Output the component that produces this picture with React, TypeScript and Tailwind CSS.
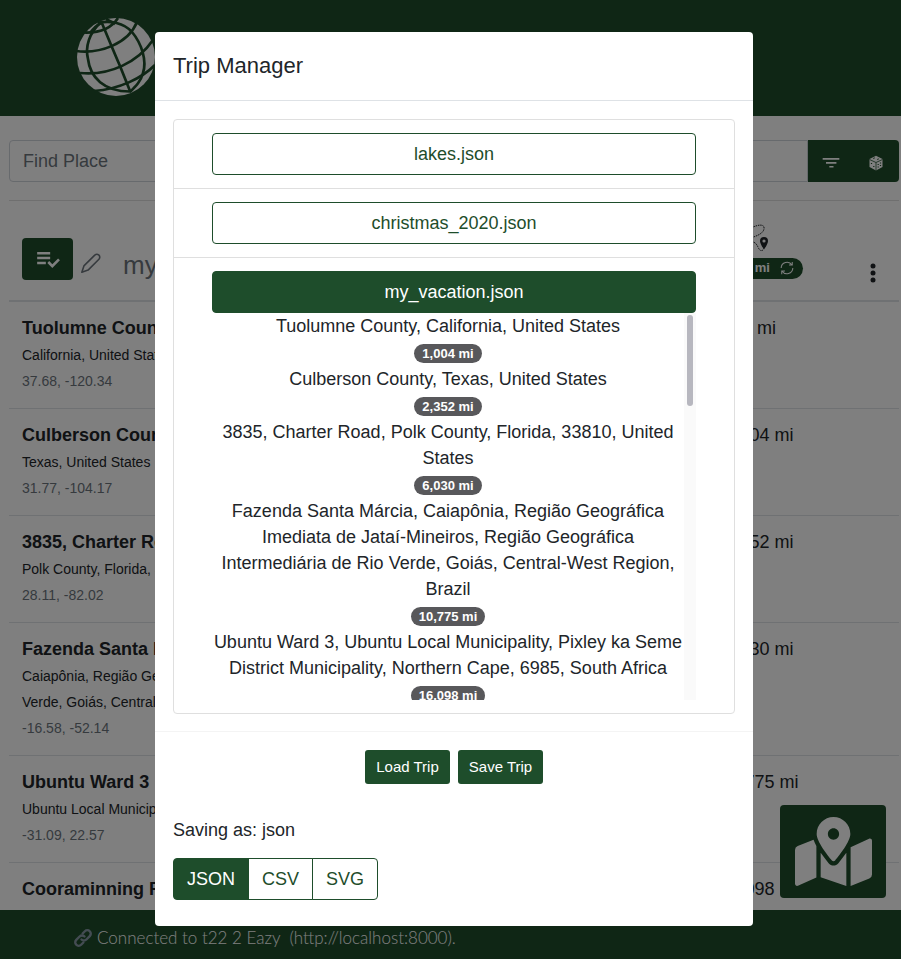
import React, { useState } from "react";

type Place = { title: string; detail: string; coords: string; distance: string };

const places: Place[] = [
  { title: "Tuolumne County", detail: "California, United States", coords: "37.68, -120.34", distance: "0 mi" },
  { title: "Culberson County", detail: "Texas, United States", coords: "31.77, -104.17", distance: "1,004 mi" },
  { title: "3835, Charter Road", detail: "Polk County, Florida, 33810, United States", coords: "28.11, -82.02", distance: "2,352 mi" },
  {
    title: "Fazenda Santa Márcia",
    detail:
      "Caiapônia, Região Geográfica Imediata de Jataí-Mineiros, Região Geográfica Intermediária de Rio Verde, Goiás, Central-West Region, Brazil",
    coords: "-16.58, -52.14",
    distance: "6,030 mi",
  },
  {
    title: "Ubuntu Ward 3",
    detail: "Ubuntu Local Municipality, Pixley ka Seme District Municipality, Northern Cape, 6985, South Africa",
    coords: "-31.09, 22.57",
    distance: "10,775 mi",
  },
  { title: "Cooraminning Road", detail: "Brookton, Western Australia", coords: "-32.99, 117.18", distance: "16,098 mi" },
];

const stops = [
  { name: "Tuolumne County, California, United States", total: "1,004 mi" },
  { name: "Culberson County, Texas, United States", total: "2,352 mi" },
  { name: "3835, Charter Road, Polk County, Florida, 33810, United States", total: "6,030 mi" },
  {
    name: "Fazenda Santa Márcia, Caiapônia, Região Geográfica Imediata de Jataí-Mineiros, Região Geográfica Intermediária de Rio Verde, Goiás, Central-West Region, Brazil",
    total: "10,775 mi",
  },
  {
    name: "Ubuntu Ward 3, Ubuntu Local Municipality, Pixley ka Seme District Municipality, Northern Cape, 6985, South Africa",
    total: "16,098 mi",
  },
];

function Globe() {
  return (
    <svg viewBox="0 0 80 80" className="size-20" aria-hidden="true">
      <circle cx="40" cy="40" r="39" fill="#fff" />
      <g fill="none" stroke="#1e4d2b" strokeWidth="2.7">
        <path d="M25 4 C31 18 37 33 44 49 L54 74" />
        <path d="M25 5 C13 16 9 30 12 42 C14 60 28 75 55 74.500" />
        <path d="M22 6 C34 3 48 6 56 15 C66 27 71 44 67 56 C65 64 60 69 54 75" />
        <path d="M8 15.500 C22 16 35 12 42 1" />
        <path d="M0 34 C24 37 52 27 61 5" />
        <path d="M4 56 C34 59 62 45 77 23" />
        <path d="M18 74 C44 72 66 61 79 48" />
        <path d="M14 16 C18 11 21 8 25 6 M30 2 L39 7" />
      </g>
    </svg>
  );
}

function RouteIcon() {
  return (
    <svg viewBox="0 0 34 30" className="h-[30px] w-[34px]" aria-hidden="true">
      <path d="M9 15 C1 19 1 9 9 5 C17 1 23 1 22 6 C21 11 14 13 9 15 M3 20 C12 17 14 20 16 24 Q18 29 21 27" fill="none" stroke="#212529" strokeWidth="1" strokeDasharray="1.5 0.8" />
      <path fillRule="evenodd" fill="#212529" d="M22 14a4 4 0 0 0-4 4c0 3 4 8.500 4 8.500s4-5.500 4-8.500a4 4 0 0 0-4-4zm0 2.400a1.600 1.600 0 1 1 0 3.200a1.600 1.600 0 1 1 0-3.200z" />
    </svg>
  );
}

function Header() {
  return (
    <header className="flex h-[116px] shrink-0 items-center bg-[#1e4d2b] pb-[2px] pl-[76px]">
      <Globe />
    </header>
  );
}

function SearchBar() {
  return (
    <div className="flex h-[42px]">
      <input aria-label="Find Place" placeholder="Find Place" className="min-w-0 flex-1 rounded-l border border-[#ced4da] px-[13px] text-lg placeholder:text-[#6c757d]" />
      <button aria-label="Filter" className="flex w-[46px] items-center justify-center bg-[#1e4d2b] text-white">
        <svg viewBox="0 0 24 24" className="mt-1 size-5" fill="currentColor">
          <path d="M10 17.500h5v-2h-5zM2 6v2h20V6zM6 12.800h12.500v-2H6z" />
        </svg>
      </button>
      <button aria-label="Random place" className="flex w-[45px] items-center justify-center rounded-r bg-[#1e4d2b] text-white">
        <svg viewBox="0 0 16 16" className="mt-1 mr-px size-4">
          <path d="M8 0.800 L14.500 4 V12 L8 15.500 L1.500 12 V4z" fill="currentColor" />
          <path d="M1.500 4.500 L8 7.500 L14.500 4.500 M8 7.500 V15.500 M5 3.500 L7 2.800 M9 4.500 L11 3.800" fill="none" stroke="#1e4d2b" strokeWidth="0.800" />
          <path d="M3.500 8v.9 M5.800 11v.9 M10.200 9v.9 M12.500 11v-.9 M10.200 12.500v-.9 M12.500 7.500v.9" stroke="#1e4d2b" strokeWidth="1.200" />
        </svg>
      </button>
    </div>
  );
}

function Itinerary() {
  return (
    <table className="w-full border-collapse text-left">
      <colgroup>
        <col />
        <col className="w-[174px]" />
        <col className="w-[53px]" />
      </colgroup>
      <thead>
        <tr className="h-[100px] border-b-2 border-[#dee2e6]">
          <th className="pt-4 pl-[13px] align-middle font-normal">
            <div className="flex items-center">
              <button aria-label="Optimize trip" className="flex h-[42px] w-[51px] items-center justify-center rounded bg-[#1e4d2b] text-white">
                <svg viewBox="0 0 24 24" className="size-[26px]" fill="currentColor">
                  <path d="M14 10H2v2.300h12V10zm0-4.500H2v2.300h12V5.500zM2 16.800h8v-2.300H2v2.300zm19.300-5.300L23 13.200l-7 7-4.600-4.600 1.700-1.700 2.900 2.900 5.300-5.300z" />
                </svg>
              </button>
              <button aria-label="Rename trip" className="ml-2 pt-2 text-[#6c757d]">
                <svg viewBox="0 0 24 24" className="size-5" fill="none" stroke="currentColor" strokeWidth="1.900" strokeLinejoin="round">
                  <path d="M1 23 L3.500 15.500 L16.500 2.500 Q19 0.500 21.500 2.500 Q23.500 5 21.500 7.500 L8.500 20.500 Z" />
                </svg>
              </button>
              <span className="ml-[22px] pt-3 text-[26px] leading-8 text-[#6c757d]">my_vacation</span>
            </div>
          </th>
          <th className="align-middle font-normal">
            <div className="flex flex-col items-center">
              <RouteIcon />
              <button className="mt-[5px] flex h-[21px] w-[88px] items-center justify-end gap-[10px] rounded-full bg-[#1e4d2b] pr-[9px] text-[13px] font-bold text-white">
                <span className="whitespace-nowrap">9,204 mi</span>
                <svg viewBox="0 0 24 24" className="size-[14px] shrink-0" fill="none" stroke="currentColor" strokeWidth="1.800">
                  <path d="M2 12 A10 10 0 0 1 20.500 7 M21 1.500 V7 H15.500 M22 12 A10 10 0 0 1 3.500 17 M3 22.500 V17 H8.500" />
                </svg>
              </button>
            </div>
          </th>
          <th className="pt-[45px] align-middle">
            <button aria-label="More" className="flex w-full justify-center text-[#212529]">
              <svg viewBox="0 0 6 20" className="h-5 w-[6px]" fill="currentColor">
                <circle cx="3" cy="3" r="2.500" />
                <circle cx="3" cy="10" r="2.500" />
                <circle cx="3" cy="17" r="2.500" />
              </svg>
            </button>
          </th>
        </tr>
      </thead>
      <tbody>
        {places.map((p) => (
          <tr key={p.title} className="border-b border-[#dee2e6] align-top">
            <td className="pt-[13px] pb-[14px] pl-[13px]">
              <div className="text-lg leading-[26px] font-bold">{p.title}</div>
              <div className="mt-px text-sm leading-[26px]">{p.detail}</div>
              <div className="text-sm leading-[26px] text-[#6c757d]">{p.coords}</div>
            </td>
            <td className="pt-[13px] pb-[14px] text-center text-lg leading-[26px]">{p.distance}</td>
            <td />
          </tr>
        ))}
      </tbody>
    </table>
  );
}

function Footer() {
  return (
    <footer className="flex h-[49px] shrink-0 items-center gap-[5px] bg-[#1e4d2b] pt-[6px] pl-[74px] font-[Lato] text-[17px] font-light text-white">
      <svg viewBox="0 0 24 24" className="size-[18px] text-[#8899a6]" fill="none" stroke="currentColor" strokeWidth="3.200" strokeLinecap="round">
        <path d="M10 14 a4.500 4.500 0 0 0 6.500 0 l4.500 -4.500 a4.500 4.500 0 0 0 -6.500 -6.500 l-3 3" />
        <path d="M14 10 a4.500 4.500 0 0 0 -6.500 0 l-4.500 4.500 a4.500 4.500 0 0 0 6.500 6.500 l3 -3" />
      </svg>
      <span className="whitespace-pre">Connected to t22 2 Eazy  (http://localhost:8000).</span>
    </footer>
  );
}

function MapButton() {
  return (
    <button aria-label="Show map" className="absolute right-[15px] bottom-[61px] flex h-[93px] w-[106px] items-center justify-center rounded bg-[#1e4d2b] text-white">
      <svg viewBox="0 0 576 512" className="h-[69px] w-[77px]" fill="currentColor" preserveAspectRatio="none">
        <path d="M288 0c-69.590 0-126 56.410-126 126 0 56.260 82.350 158.800 113.900 196.020 6.390 7.540 17.820 7.540 24.200 0C331.650 284.800 414 182.260 414 126 414 56.410 357.590 0 288 0zm0 168c-23.200 0-42-18.800-42-42s18.800-42 42-42 42 18.800 42 42-18.800 42-42 42zM20.120 215.950A32.006 32.006 0 0 0 0 245.660v250.320c0 11.320 11.430 19.060 21.940 14.860L160 448V214.920c-8.840-15.980-16.070-31.540-21.250-46.420L20.120 215.950zM288 359.670c-14.070 0-27.380-6.180-36.510-16.960-19.660-23.200-40.570-49.620-59.490-76.720v182l192 64V266c-18.920 27.090-39.820 53.520-59.490 76.720-9.130 10.770-22.440 16.950-36.510 16.950zm266.060-198.510L416 224v288l139.880-55.950A31.996 31.996 0 0 0 576 426.340V176.020c0-11.320-11.430-19.060-21.940-14.860z" />
      </svg>
    </button>
  );
}

function TripManager() {
  const files = ["lakes.json", "christmas_2020.json", "my_vacation.json"];
  const [selected, setSelected] = useState("my_vacation.json");
  const [format, setFormat] = useState("JSON");
  return (
    <section role="dialog" aria-labelledby="trip-manager-title" className="mr-[-7px] w-[598px] max-w-full rounded bg-white">
      <h2 id="trip-manager-title" className="border-b border-[#dee2e6] px-[18px] pt-[17px] pb-[17px] text-[22px] leading-[34px]">
        Trip Manager
      </h2>
      <div className="px-[18px] pt-[18px] pb-[17px]">
        <ul className="rounded border border-[#dfdfdf]">
          {files.map((file) => (
            <li key={file} className="border-b border-[#dfdfdf] px-[38px] py-[13px] last:border-b-0">
              <button
                aria-pressed={selected === file}
                onClick={() => setSelected(file)}
                className={
                  "block h-[42px] w-full rounded border border-[#1e4d2b] text-lg leading-[40px] " +
                  (selected === file ? "bg-[#1e4d2b] text-white" : "bg-white text-[#1e4d2b]")
                }
              >
                {file}
              </button>
              {selected === file && (
                <div className="flex h-[387px]">
                  <ol className="min-w-0 flex-1 overflow-hidden text-center text-lg leading-[26px]">
                    {stops.map((s) => (
                      <li key={s.name}>
                        {s.name}
                        <div className="flex h-[27px] items-center justify-center pt-px">
                          <span className="h-[19px] rounded-full bg-[#58585b] px-2 text-[13px] leading-[19px] font-bold text-white">{s.total}</span>
                        </div>
                      </li>
                    ))}
                  </ol>
                  <div className="w-3 shrink-0 bg-[#fafafa] px-[3px] pt-[2px]" aria-hidden="true">
                    <div className="h-[91px] w-[6px] rounded-full bg-[#b7b7bf]" />
                  </div>
                </div>
              )}
            </li>
          ))}
        </ul>
      </div>
      <div className="border-t border-[#f4f4f4] px-[18px] pt-[18px] pb-[26px]">
        <div className="flex justify-center gap-2">
          <button className="h-[34px] w-[85px] rounded-[3px] bg-[#1e4d2b] text-[15px] text-white">Load Trip</button>
          <button className="h-[34px] w-[85px] rounded-[3px] bg-[#1e4d2b] text-[15px] text-white">Save Trip</button>
        </div>
        <p className="mt-8 text-lg leading-7">Saving as: {format.toLowerCase()}</p>
        <div role="group" aria-label="File format" className="mt-[14px] flex text-lg">
          {["JSON", "CSV", "SVG"].map((f) => (
            <button
              key={f}
              aria-pressed={format === f}
              onClick={() => setFormat(f)}
              className={
                "-ml-px h-[42px] border border-[#1e4d2b] px-[13px] first:ml-0 first:rounded-l last:rounded-r " +
                (format === f ? "bg-[#1e4d2b] text-white" : "bg-white text-[#1e4d2b]")
              }
            >
              {f}
            </button>
          ))}
        </div>
      </div>
    </section>
  );
}

export default function App() {
  return (
    <div className="relative flex h-screen flex-col overflow-hidden bg-white font-['Liberation_Sans',Arial,sans-serif] text-[#212529]">
      <Header />
      <main className="min-h-0 flex-1 overflow-hidden pt-6 pr-[2px] pl-[9px]">
        <SearchBar />
        <hr className="mt-[18px] border-[#dfdfdf]" />
        <Itinerary />
      </main>
      <Footer />
      <MapButton />
      <div className="absolute inset-0 flex items-start justify-center bg-black/50 pt-8">
        <TripManager />
      </div>
    </div>
  );
}
